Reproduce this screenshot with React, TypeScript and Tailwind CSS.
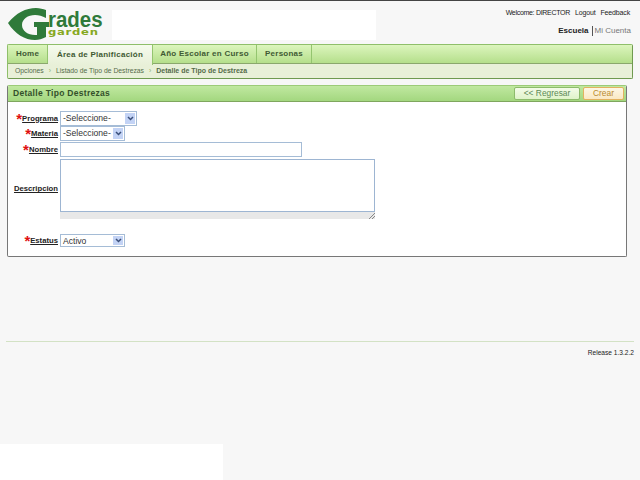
const LABEL = "text-right font-bold text-[7.7px] underline text-[#222] leading-none whitespace-nowrap";

function Logo() {
  return (
    <div className="relative w-[96px] h-[33px]">
      <svg width="96" height="33" viewBox="0 0 96 33" className="absolute left-0 top-0">
        <path d="M0 16 C8 6 18 1 28 1 C32 1 35 2 38 3 L38 11 C34 9 31 8 27 8 C20 8 14 12 14 18 C14 24 20 28 27 28 L29 28 L29 20 L26 20 L26 15 L41 15 L41 20 L38 20 L38 30 C34 32 31 33 27 33 C17 33 7 27 0 16 Z" fill="#2f7a3a" />
      </svg>
      <span className="absolute left-[40px] top-[3px] text-[22px] leading-[19px] font-bold text-[#2f7a3a] scale-x-[0.93] origin-left">
        rades
      </span>
      <span className="absolute left-[40px] top-[22px] text-[8px] leading-[8px] font-bold text-[#86a821] tracking-[0.5px] scale-x-[1.45] origin-left font-['DejaVu_Sans',sans-serif]">
        garden
      </span>
    </div>
  );
}

function Select({ text, width }: { text: string; width: string }) {
  return (
    <div className={`${width} h-full flex items-stretch border border-[#a5bcd6] bg-white`}>
      <span className="flex-1 pl-[2px] text-[8.6px] leading-[13px] text-[#333] whitespace-nowrap overflow-hidden">{text}</span>
      <span className="w-[10px] m-[1px] bg-[#c3d3f5] flex items-center justify-center">
        <svg width="7" height="5" viewBox="0 0 7 5">
          <path d="M1 1 L3.5 3.5 L6 1" fill="none" stroke="#3a4f7a" strokeWidth="1.5" />
        </svg>
      </span>
    </div>
  );
}

function Row({ label, required, className, children }: { label: string; required?: boolean; className?: string; children: React.ReactNode }) {
  return (
    <div className={`flex gap-[2px] ${className ?? ""}`}>
      <div className="w-[49px] flex justify-end items-center">
        {required && <span className="text-[#e01010] text-[15px] font-bold leading-none h-[12px] -mt-[4px]">*</span>}
        <span className={LABEL}>{label}</span>
      </div>
      {children}
    </div>
  );
}

export default function App() {
  return (
    <div className="relative w-[640px] h-[480px] overflow-hidden bg-[#f7f7f7] border-t border-[#444] font-['Liberation_Sans',sans-serif]">
      {/* Header */}
      <div className="flex h-[43px] pl-[8px] pr-[8px]">
        <div className="pt-[6px]">
          <Logo />
        </div>
        <div className="ml-[8px] mt-[9px] w-[264px] h-[30px] bg-white" />
        <div className="ml-auto flex flex-col items-end pt-[7px]">
          <div className="flex gap-[5px] mr-[2px] text-[7px] tracking-[-0.15px] leading-[9px] text-[#222]">
            <span className="tracking-[-0.3px]">Welcome: DIRECTOR</span>
            <span>Logout</span>
            <span>Feedback</span>
          </div>
          <div className="mt-[9px] mr-[1px] flex items-center text-[8px] leading-[10px]">
            <span className="font-bold text-[#222]">Escuela</span>
            <span className="ml-[3px] pl-[2px] border-l border-[#555] text-[#777]">Mi Cuenta</span>
          </div>
        </div>
      </div>

      {/* Nav */}
      <div className="mx-[7px] w-[626px] h-[35px] rounded-[2px] border border-[#8fbf6a] border-b-[#6f9a50] border-r-[#6f9a50] bg-[#e8f0d8] overflow-hidden">
        <div className="h-[19px] flex border-b border-[#8aa86c] bg-gradient-to-b from-[#dcf5bd] to-[#b5df8b] text-[8px] font-bold tracking-[0.25px] text-[#3f5a33] whitespace-nowrap">
          <div className="w-[40px] flex items-center justify-center border-r border-[#94c56f]">Home</div>
          <div className="w-[105px] h-[20px] flex items-center justify-center border-r border-[#94c56f] bg-gradient-to-b from-[#f6fbee] to-[#e8f0d8]">Área de Planificación</div>
          <div className="w-[104px] flex items-center justify-center border-r border-[#94c56f]">Año Escolar en Curso</div>
          <div className="w-[55px] flex items-center justify-center border-r border-[#94c56f]">Personas</div>
        </div>
        <div className="h-[14px] flex items-center pl-[7px] text-[6.8px] text-[#556b4a] whitespace-nowrap">
          <span>Opciones</span>
          <span className="mx-[5px] text-[#8ab070]">›</span>
          <span>Listado de Tipo de Destrezas</span>
          <span className="mx-[5px] text-[#8ab070]">›</span>
          <span className="font-bold text-[7px]">Detalle de Tipo de Destreza</span>
        </div>
      </div>

      {/* Panel */}
      <div className="mt-[6px] mx-[7px] w-[620px] h-[172px] rounded-[2px] border border-[#777] border-t-[#9ccb78] bg-white overflow-hidden">
        <div className="h-[16px] flex items-center bg-gradient-to-b from-[#c0e8a0] to-[#a3d77f] border-b border-[#7fa65e] pl-[5px] pr-[2px]">
          <span className="text-[8.5px] font-bold tracking-[0.3px] text-[#33502a]">Detalle Tipo Destrezas</span>
          <div className="ml-auto flex gap-[3px]">
            <button className="w-[66px] h-[13px] rounded-[2px] border border-[#8dbb6c] bg-gradient-to-b from-[#f4fbe9] to-[#dff3c9] text-[8.4px] leading-[11px] text-[#5d8a55]">&lt;&lt; Regresar</button>
            <button className="w-[41px] h-[13px] rounded-[2px] border border-[#e3b25f] bg-gradient-to-b from-[#fdf7e6] to-[#fae8c4] text-[8.4px] leading-[11px] text-[#b98a2f]">Crear</button>
          </div>
        </div>

        <div className="pt-[9px] pl-[1px]">
          <Row label="Programa" required className="h-[15px]">
            <Select text="-Seleccione-" width="w-[77px]" />
          </Row>
          <Row label="Materia" required className="h-[15px]">
            <Select text="-Seleccione-" width="w-[65px]" />
          </Row>
          <Row label="Nombre" required className="h-[15px] mt-[1px]">
            <div className="w-[242px] h-[15px] border border-[#a5bcd6] bg-white" />
          </Row>
          <Row label="Descripcion" className="mt-[2px] h-[60px]">
            <div className="w-[315px]">
              <div className="h-[53px] border border-[#9db5d2] bg-white" />
              <div className="h-[7px] bg-[#e8e8e8] flex justify-end items-end">
                <svg width="6" height="6" viewBox="0 0 6 6">
                  <path d="M0 6 L6 0 M3 6 L6 3" stroke="#888" strokeWidth="1" />
                </svg>
              </div>
            </div>
          </Row>
          <Row label="Estatus" required className="mt-[15px] h-[13px]">
            <Select text="Activo" width="w-[65px]" />
          </Row>
        </div>
      </div>

      {/* Footer */}
      <div className="mt-[84px] mx-[6px] w-[628px] border-t border-[#d3e2c5] pt-[6px] text-right text-[6.6px] leading-[9px] text-[#222]">
        Release 1.3.2.2
      </div>

      <div className="absolute left-0 bottom-0 w-[223px] h-[36px] bg-white" />
    </div>
  );
}
